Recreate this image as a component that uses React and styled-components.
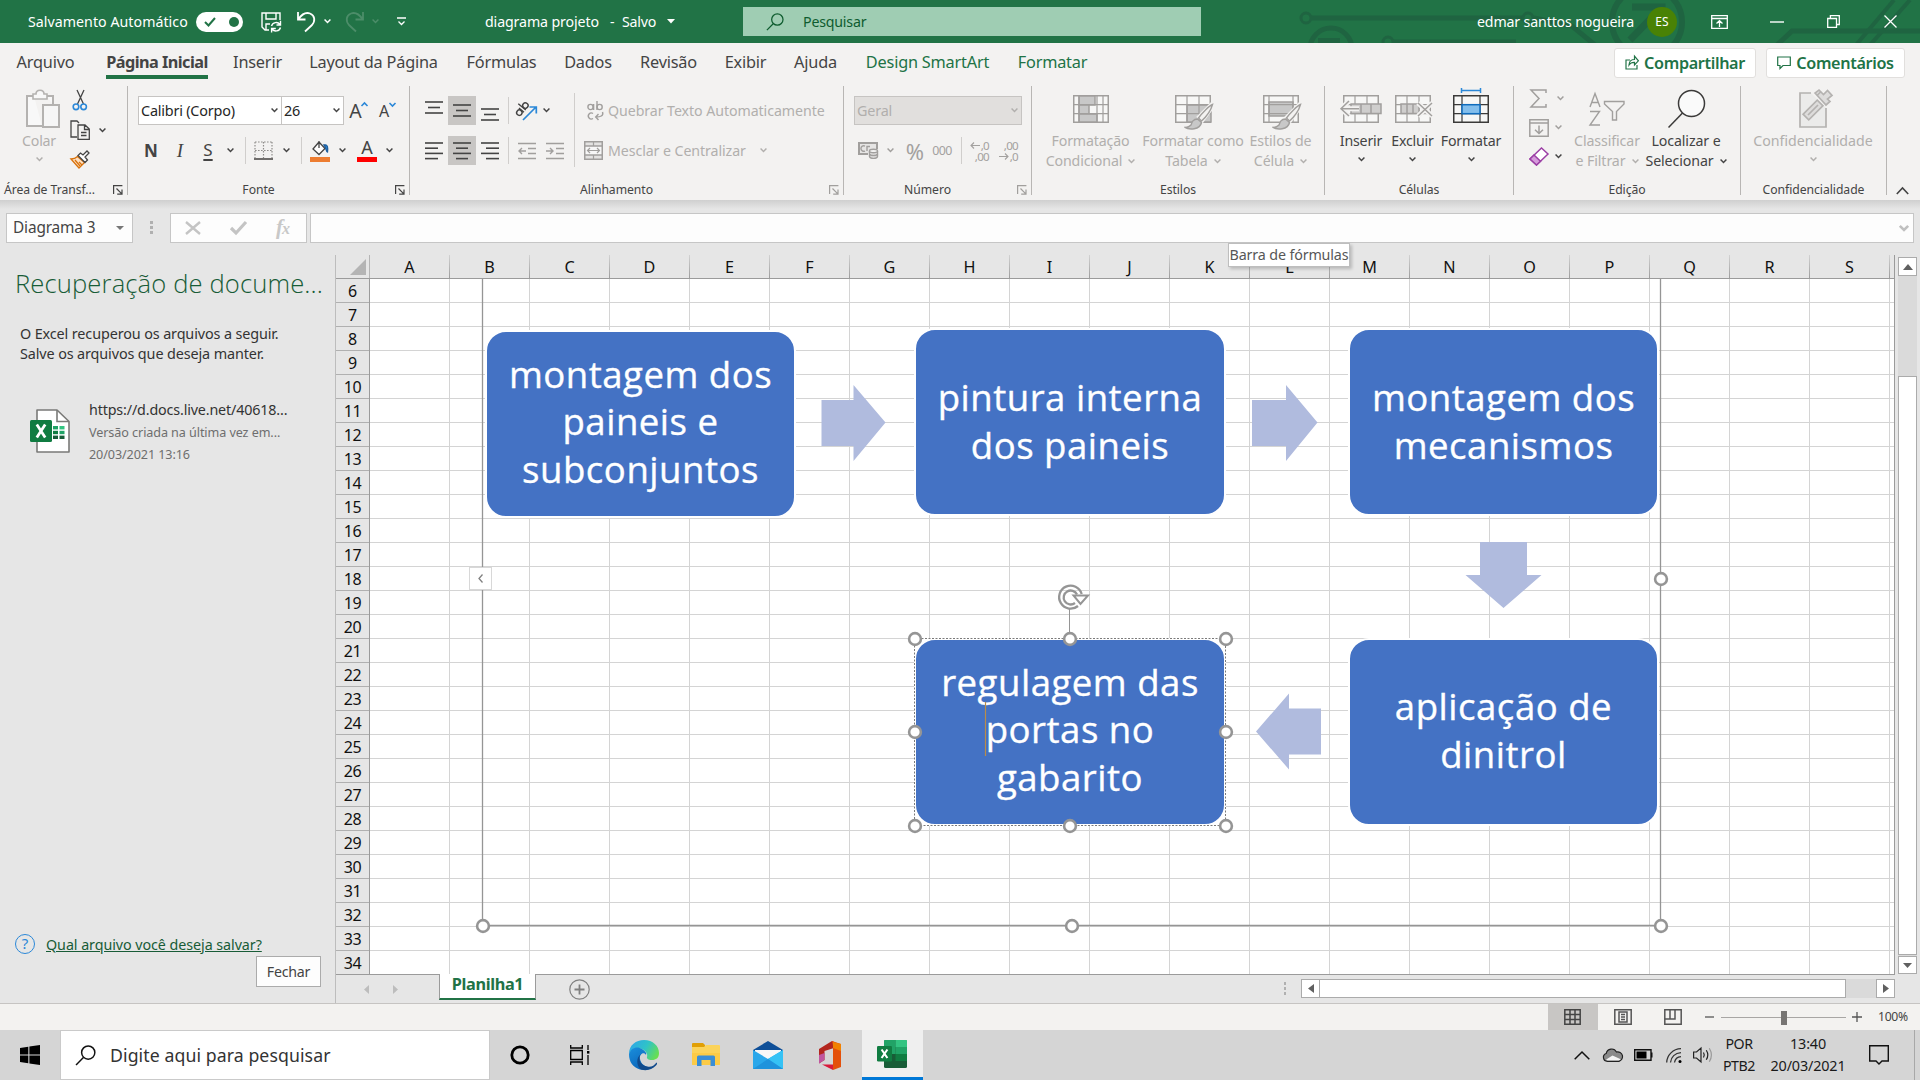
import React from "react";
import styled, { createGlobalStyle, css } from "styled-components";

const UI = '"Noto Sans", "Open Sans", sans-serif';
const INK = "#444444";
const DIM = "#b1afad";
const GREEN = "#217346";

const GlobalStyle = createGlobalStyle`
  * { box-sizing: border-box; }
  html, body { margin: 0; padding: 0; overflow: hidden; }
  body { font-family: ${UI}; color: ${INK}; background: #e6e6e6; }
  svg { display: block; flex: none; overflow: visible; }
`;

const Window = styled.div`
  width: 1920px;
  height: 1080px;
  display: flex;
  flex-direction: column;
  background: #e6e6e6;
  overflow: hidden;
`;

/* ---------- shared ---------- */
const Item = styled.div`
  display: flex;
  align-items: center;
  justify-content: ${(p) => p.$align || "flex-start"};
  flex: none;
  width: ${(p) => p.$w}px;
  margin-left: ${(p) => p.$ml || 0}px;
`;

const Label = styled.span`
  flex: none;
  width: ${(p) => (p.$w ? p.$w + "px" : "auto")};
  margin-left: ${(p) => p.$ml || 0}px;
  font-size: ${(p) => p.$size || 14.2}px;
  letter-spacing: ${(p) => p.$ls ?? -0.2}px;
  font-weight: ${(p) => p.$weight || 400};
  line-height: 20px;
  white-space: nowrap;
  color: ${(p) => p.$color || "inherit"};
`;

const Chevron = ({ color = INK, w = 7, sw = 1.5 }) => (
  <svg width={w} height={w * 0.6} viewBox="0 0 10 6" fill="none" stroke={color} strokeWidth={(sw * 10) / w}>
    <path d="M0.8 0.8 L5 5 L9.2 0.8" />
  </svg>
);

const Svg = ({ w, h, vb, children, ...rest }) => (
  <svg width={w} height={h} viewBox={vb || `0 0 ${w} ${h}`} fill="none" {...rest}>
    {children}
  </svg>
);

/* ---------- title bar ---------- */
const TitleBar = styled.header`
  position: relative;
  height: 43px;
  flex: none;
  display: flex;
  align-items: center;
  background: ${GREEN};
  color: #fff;
`;
const TitlePattern = styled.div`
  position: absolute;
  right: 0;
  top: 0;
  width: 640px;
  height: 43px;
  overflow: hidden;
`;
const TitleContent = styled.div`
  position: relative;
  display: flex;
  align-items: center;
  width: 100%;
  height: 42px;
`;
const Toggle = styled.div`
  width: 47px;
  height: 20px;
  margin-left: 8px;
  padding: 0 4px 0 8px;
  border-radius: 10px;
  background: #fff;
  display: flex;
  align-items: center;
  justify-content: space-between;
`;
const ToggleKnob = styled.i`
  width: 10px;
  height: 10px;
  border-radius: 50%;
  background: ${GREEN};
`;
const SearchBox = styled.div`
  width: 458px;
  height: 29px;
  margin-left: 68px;
  padding-left: 23px;
  display: flex;
  align-items: center;
  background: #9fcdb3;
  color: #0e5c2f;
`;
const Avatar = styled.div`
  width: 30px;
  height: 30px;
  margin-left: 12px;
  border-radius: 50%;
  background: #498205;
  display: flex;
  align-items: center;
  justify-content: center;
  font-size: 12px;
`;

const Magnifier = ({ w, h, color, sw = 1.4 }) => (
  <Svg w={w} h={h} vb="0 0 20 20">
    <circle cx="12.6" cy="7.2" r="6.3" stroke={color} strokeWidth={sw} />
    <path d="M8 12 L1 19" stroke={color} strokeWidth={sw} />
  </Svg>
);

function Title() {
  return (
    <TitleBar>
      <TitlePattern>
        <Svg w={640} h={43} stroke="#1f6441" strokeWidth="5">
          <circle cx="26" cy="18" r="5" strokeWidth="3" />
          <path d="M32 18 H242" />
          <circle cx="248" cy="18" r="5" strokeWidth="3" />
          <circle cx="51" cy="49" r="21" />
          <rect x="38" y="38" width="22" height="7" fill="#1f6441" stroke="none" />
          <circle cx="108" cy="42" r="5" strokeWidth="3" />
          <path d="M114 42 H236" />
          <path d="M254 18 L292 26 L315 45" />
          <circle cx="367" cy="22" r="35" strokeWidth="6" />
          <path d="M352 7 H382 V32 M380 9 L350 40" strokeWidth="7" />
          <path d="M497 45 L512 31 H640" />
          <path d="M576 45 L614 0 M590 45 L630 0" strokeWidth="4" />
        </Svg>
      </TitlePattern>
      <TitleContent>
        <Label $w={160} $ml={28} $ls={0.04}>Salvamento Automático</Label>
        <Toggle>
          <Svg w={12} h={10}><path d="M1 5 L4.5 8.5 L11 1" stroke={GREEN} strokeWidth="2" /></Svg>
          <ToggleKnob />
        </Toggle>
        <Item $w={21} $ml={18}>
          <Svg w={21} h={21} stroke="#fff" strokeWidth="1.4">
            <path d="M8 19 H4 L1 16 V2 H19 V9 M5 2 V8 H15 V2 M5 19 V13 H9" />
            <path d="M10.5 15 A4.8 4.8 0 0 1 19 13.5 M19.5 9.8 V14 H15.5 M19.5 16.5 A4.8 4.8 0 0 1 11 18 M10.6 21.5 V17.5 H14.8" />
          </Svg>
        </Item>
        <Item $w={19} $ml={15}>
          <Svg w={19} h={21} stroke="#fff" strokeWidth="1.8">
            <path d="M1 1 V8.5 H8.5 M1.5 8 C5 3 9 1 13 2.5 C18 4.5 18.5 10 15 14 L8 20.5" />
          </Svg>
        </Item>
        <Item $w={8} $ml={8}><Chevron color="#fff" /></Item>
        <Item $w={19} $ml={13}>
          <Svg w={19} h={21} stroke="#4c8d69" strokeWidth="1.8">
            <path d="M18 1 V8.5 H10.5 M17.5 8 C14 3 10 1 6 2.5 C1 4.5 0.5 10 4 14 L11 20.5" />
          </Svg>
        </Item>
        <Item $w={8} $ml={8}><Chevron color="#4c8d69" /></Item>
        <Item $w={10} $ml={17}>
          <Svg w={9} h={9} stroke="#fff" strokeWidth="1.3"><path d="M0 1 H9 M1.5 4.5 L4.5 7.5 L7.5 4.5" /></Svg>
        </Item>
        <Label $w={117} $ml={78} $ls={-0.12}>diagrama projeto</Label>
        <Label $w={12} $ml={8}>-</Label>
        <Label $w={36} $ml={0}>Salvo</Label>
        <Item $w={8} $ml={9}>
          <Svg w={8} h={5}><path d="M0 0 H8 L4 4.5 Z" fill="#fff" /></Svg>
        </Item>
        <SearchBox>
          <Magnifier w={18} h={18} color="#0e5c2f" />
          <Label $ml={19}>Pesquisar</Label>
        </SearchBox>
        <Label $w={158} $ml={276} $ls={-0.15}>edmar santtos nogueira</Label>
        <Avatar>ES</Avatar>
        <Item $w={18} $ml={34}>
          <Svg w={17} h={14} stroke="#fff" strokeWidth="1.3">
            <path d="M0.7 0.7 H16.3 V13.3 H0.7 Z M0.7 3.5 H16.3 M8.5 12 V6 M5.5 8.5 L8.5 5.7 L11.5 8.5" />
          </Svg>
        </Item>
        <Item $w={14} $ml={41}><Svg w={14} h={2}><path d="M0 1 H14" stroke="#fff" strokeWidth="1.4" /></Svg></Item>
        <Item $w={14} $ml={43}>
          <Svg w={13} h={13} stroke="#fff" strokeWidth="1.3"><path d="M0.7 3.5 H9.5 V12.3 H0.7 Z M3.4 3.5 V0.7 H12.3 V9.5 H9.5" /></Svg>
        </Item>
        <Item $w={14} $ml={43}>
          <Svg w={13} h={13} stroke="#fff" strokeWidth="1.3"><path d="M0.5 0.5 L12.5 12.5 M12.5 0.5 L0.5 12.5" /></Svg>
        </Item>
      </TitleContent>
    </TitleBar>
  );
}

/* ---------- tabs ---------- */
const TabRow = styled.nav`
  height: 41px;
  flex: none;
  display: flex;
  align-items: flex-start;
  padding: 5px 15px 0 16px;
  background: #f3f2f1;
`;
const Tab = styled.div`
  width: ${(p) => p.$w}px;
  margin-right: ${(p) => p.$mr}px;
  height: 31px;
  flex: none;
  display: flex;
  justify-content: center;
  border-bottom: 4px solid ${(p) => (p.$active ? GREEN : "transparent")};
  font-size: 16.3px;
  letter-spacing: ${(p) => (p.$active ? -0.55 : -0.2)}px;
  line-height: 28px;
  font-weight: ${(p) => (p.$active ? 700 : 400)};
  color: ${(p) => (p.$context ? GREEN : INK)};
  white-space: nowrap;
`;
const TabAction = styled.div`
  width: ${(p) => p.$w}px;
  height: 30px;
  margin-left: ${(p) => p.$ml || 10}px;
  padding-bottom: 1px;
  flex: none;
  display: flex;
  align-items: center;
  justify-content: center;
  gap: 5px;
  background: #fff;
  border: 1px solid #e1dfdd;
  border-radius: 3px;
  color: ${GREEN};
  font-size: 16.2px;
  font-weight: 600;
  letter-spacing: -0.35px;
  white-space: nowrap;
`;
const TABS = [
  ["Arquivo", 59, 31], ["Página Inicial", 102, 26], ["Inserir", 47, 27], ["Layout da Página", 131, 28], ["Fórmulas", 69, 28],
  ["Dados", 48, 28], ["Revisão", 57, 28], ["Exibir", 41, 28], ["Ajuda", 43, 28], ["Design SmartArt", 125, 28], ["Formatar", 69, 28],
];
function Tabs() {
  return (
    <TabRow>
      {TABS.map(([t, w, mr], i) => (
        <Tab key={t} $w={w} $mr={mr} $active={i === 1} $context={i > 8}>{t}</Tab>
      ))}
      <TabAction $w={142} $ml={499}>
        <Svg w={14} h={15} stroke={GREEN} strokeWidth="1.2">
          <path d="M5 5 H1 V14 H12 V10 M4 10 C4 6 7 4.5 9.5 4.5 V1.2 L13.4 5.8 L9.5 10 V7.3 C7 7.2 5.2 8 4 10 Z" />
        </Svg>
        Compartilhar
      </TabAction>
      <TabAction $w={139}>
        <Svg w={14} h={14} stroke={GREEN} strokeWidth="1.2"><path d="M0.7 1 H13.3 V9.5 H6 L3 12.5 V9.5 H0.7 Z" /></Svg>
        Comentários
      </TabAction>
    </TabRow>
  );
}

/* ---------- ribbon ---------- */
const Ribbon = styled.section`
  height: 116px;
  flex: none;
  display: flex;
  padding: 2px 0 5px;
  background: #f3f2f1;
`;
const Group = styled.div`
  width: ${(p) => p.$w}px;
  height: 109px;
  flex: none;
  display: flex;
  flex-direction: column;
  justify-content: space-between;
  border-right: 1px solid #b8b6b4;
`;
const GroupBody = styled.div`
  display: flex;
  height: 90px;
  padding-left: ${(p) => p.$pl || 0}px;
`;
const Rows = styled.div`
  display: flex;
  flex-direction: column;
  padding-top: 10px;
  gap: 11px;
  flex: none;
  width: ${(p) => (p.$w ? p.$w + "px" : "auto")};
`;
const Row = styled.div`
  display: flex;
  align-items: center;
  height: 29px;
`;
const GroupFoot = styled.div`
  display: flex;
  align-items: center;
  height: 10px;
  padding-right: ${(p) => (p.$launcher ? 4 : 0)}px;
  font-size: 12.2px;
  letter-spacing: -0.05px;
  line-height: 10px;
  color: ${INK};
`;
const FootText = styled.div`
  flex: 1;
  text-align: center;
  white-space: nowrap;
  padding-right: ${(p) => p.$pr || 0}px;
`;
const Launcher = ({ color = INK }) => (
  <Svg w={10} h={10} stroke={color} strokeWidth="1.2">
    <path d="M0.6 9 V0.6 H9.4 M3.5 3.5 L8.8 8.8 M9 4.5 V9.2 H4.2" />
  </Svg>
);
const Foot = ({ children, launcher, pr }) => (
  <GroupFoot $launcher={!!launcher}>
    <FootText $pr={pr ?? (launcher ? 6 : 0)}>{children}</FootText>
    {launcher && <Launcher color={launcher} />}
  </GroupFoot>
);
const VLine = styled.i`
  width: 1px;
  height: ${(p) => p.$h || 27}px;
  margin-left: ${(p) => p.$ml}px;
  margin-top: ${(p) => p.$mt || 0}px;
  background: #d0cecc;
  flex: none;
`;
const Combo = styled.div`
  width: ${(p) => p.$w}px;
  height: 29px;
  flex: none;
  margin-left: ${(p) => p.$ml || 0}px;
  padding: 0 3px 0 2px;
  display: flex;
  align-items: center;
  justify-content: space-between;
  border: 1px solid #c6c4c2;
  background: ${(p) => (p.$disabled ? "#e1dfdd" : "#fff")};
  color: ${(p) => (p.$disabled ? DIM : "#262626")};
  font-size: 14.4px;
  letter-spacing: -0.2px;
  white-space: nowrap;
`;
const Pressed = styled.div`
  width: 28px;
  height: 29px;
  margin-left: 5px;
  display: flex;
  align-items: center;
  justify-content: center;
  background: #c8c6c4;
  flex: none;
`;
const BigButton = styled.div`
  width: ${(p) => p.$w}px;
  margin-left: ${(p) => p.$ml || 0}px;
  flex: none;
  display: flex;
  flex-direction: column;
  align-items: center;
  color: ${(p) => (p.$disabled ? DIM : INK)};
`;
const BigIcon = styled.div`
  height: 45px;
  padding-left: ${(p) => p.$pl || 0}px;
  display: flex;
  align-items: center;
  justify-content: center;
`;
const BigText = styled.div`
  display: flex;
  align-items: center;
  justify-content: center;
  gap: 6px;
  height: 20px;
  font-size: 14.2px;
  letter-spacing: ${(p) => p.$ls ?? -0.2}px;
  line-height: 20px;
  white-space: nowrap;
`;
const ChevronRow = styled.div`
  height: 16px;
  display: flex;
  align-items: center;
`;
const SmallStack = styled.div`
  width: 38px;
  margin-left: ${(p) => p.$ml}px;
  margin-top: ${(p) => p.$mt || 0}px;
  display: flex;
  flex-direction: column;
  flex: none;
`;
const SmallRow = styled.div`
  height: ${(p) => p.$h || 30}px;
  display: flex;
  align-items: center;
  gap: ${(p) => p.$gap ?? 9}px;
`;
const Glyph = styled.span`
  width: ${(p) => p.$w}px;
  margin-left: ${(p) => p.$ml || 0}px;
  flex: none;
  text-align: center;
  font-size: ${(p) => p.$size || 17}px;
  line-height: 22px;
  letter-spacing: ${(p) => p.$ls || 0}px;
  color: ${(p) => p.$color || INK};
  ${(p) => p.$bold && css`font-weight: 700;`}
  ${(p) => p.$italic && css`font-style: italic; font-family: "Liberation Serif", serif;`}
  ${(p) => p.$underline && css`padding-bottom: 2px; text-decoration: underline; text-underline-offset: 3px; text-decoration-thickness: 1.5px;`}
`;
const ColorGlyph = styled.div`
  width: 20px;
  height: 23px;
  flex: none;
  margin-left: ${(p) => p.$ml}px;
  border-bottom: 5px solid ${(p) => p.$bar};
  display: flex;
  align-items: flex-end;
  justify-content: center;
  font-size: 18px;
  line-height: 19px;
`;
const DecimalGlyph = styled.div`
  width: 20px;
  margin-left: ${(p) => p.$ml}px;
  font-size: 11.6px;
  line-height: 11px;
  letter-spacing: -0.7px;
  text-align: right;
  color: #a3a19f;
  white-space: nowrap;
`;
const Decimals = styled.div`
  display: flex;
  justify-content: flex-end;
  align-items: center;
  height: 11px;
  gap: 1px;
`;
const SmallArrow = ({ flip }) => (
  <Svg w={10} h={7} stroke="#a3a19f" strokeWidth="1.1">
    <path d={flip ? "M0 3.5 H9 M6 0.5 L9 3.5 L6 6.5" : "M10 3.5 H1 M4 0.5 L1 3.5 L4 6.5"} />
  </Svg>
);

const Lines = ({ rows, color = INK, h = 20, w = 18 }) => (
  <Svg w={w} h={h} stroke={color} strokeWidth="1.6">
    {rows.map(([y, a, b]) => <path key={y} d={`M${a} ${y} H${b}`} />)}
  </Svg>
);
const GridIcon = ({ w = 36, h = 28, stroke = "#a19f9d", fill = "#c8c8c8", fills = [], cols = [12, 24], children }) => (
  <Svg w={w} h={h} stroke={stroke} strokeWidth="1.5">
    <rect x="0.75" y="0.75" width={w - 1.5} height={h - 1.5} fill="#f7f7f6" />
    {fills.map(([x, y, a, b], i) => <rect key={i} x={x} y={y} width={a} height={b} fill={fill} />)}
    <path d={`M0 9.7 H${w} M0 18.6 H${w} ` + cols.map((c) => `M${c} 0 V${h}`).join(" ")} strokeWidth="1.2" />
    {children}
  </Svg>
);
const BrushOverlay = () => (
  <g stroke="#a19f9d" strokeWidth="1.4">
    <path d="M37 9 L24 22 L27 26 L38 11 Z" fill="#f3f2f1" stroke="#f3f2f1" strokeWidth="4" />
    <path d="M37.5 9.5 C34 11 27 18 23.5 23 L26.5 26 C31 22 36 15 37.5 9.5 Z" fill="#f3f2f1" />
    <path d="M22.5 24 C18 24 17 27 16 30 C14 32 11 32.5 9.5 32.2 C14 35 25 35 26.5 27.5 Z" fill="#c8c8c8" />
  </g>
);
const TwoLine = ({ a, b, dim, ls }) => (
  <>
    <BigText $ls={ls}>{a}</BigText>
    <BigText $ls={ls}>{b} <Chevron color={dim ? DIM : INK} /></BigText>
  </>
);
const RibbonEnd = styled.div`
  flex: 1;
  display: flex;
  align-items: flex-end;
  padding: 0 0 0 9px;
`;

function RibbonBar() {
  return (
    <Ribbon>
      <Group $w={128}>
        <GroupBody $pl={9}>
          <BigButton $w={60} $disabled>
            <BigIcon $pl={7}>
              <Svg w={34} h={40} stroke="#b4b2b0" strokeWidth="2">
                <path d="M16 37 H1 V7 H8 M20 7 H27 V15" fill="#f8f8f8" />
                <path d="M7 10 V5 H10 C10 0 18 0 18 5 H21 V10 Z" fill="#f8f8f8" strokeWidth="1.6" />
                <rect x="17" y="16" width="16" height="22" fill="#f6f6f6" />
              </Svg>
            </BigIcon>
            <BigText>Colar</BigText>
            <ChevronRow><Chevron color={DIM} /></ChevronRow>
          </BigButton>
          <SmallStack $ml={1}>
            <SmallRow $h={29}>
              <Svg w={20} h={21} strokeWidth="1.3">
                <path d="M7 0 L13.5 14 M14 0 L7.5 14" stroke={INK} />
                <circle cx="6" cy="16.8" r="2.8" stroke="#2b88d8" strokeWidth="1.6" />
                <circle cx="13.6" cy="16.8" r="2.8" stroke="#2b88d8" strokeWidth="1.6" />
              </Svg>
            </SmallRow>
            <SmallRow $h={30}>
              <Svg w={20} h={20} stroke={INK} strokeWidth="1.3">
                <path d="M7 17 H1 V1 H7 L9 3 M8 5 H15 L19.3 9 V19.3 H8 Z M14.5 5 V9.5 H19 M11 12.5 H16.5 M11 15.5 H16.5" />
              </Svg>
              <Chevron />
            </SmallRow>
            <SmallRow $h={29}>
              <Svg w={20} h={19} strokeWidth="1.3">
                <path d="M1 9 L9 18 L14.5 12.5 L7.5 6.5 C5.5 8.5 3.5 9 1 9 Z" fill="#fce0c4" stroke="#d9730d" />
                <path d="M5 10 L10 16 M9 12 L12 15" stroke="#d9730d" />
                <path d="M8 5.5 L15 12.5 L17.5 10 L15 7 L19 3 L17 1 L13 5 L10.5 3 Z" fill="#fff" stroke={INK} />
              </Svg>
            </SmallRow>
          </SmallStack>
        </GroupBody>
        <Foot launcher={INK} pr={14}>Área de Transf...</Foot>
      </Group>

      <Group $w={282}>
        <GroupBody $pl={10}>
          <Rows>
            <Row>
              <Combo $w={144}>Calibri (Corpo)<Chevron /></Combo>
              <Combo $w={63} $ml={-1}>26<Chevron /></Combo>
              <Glyph $w={13} $ml={5} $size={19.5}>A</Glyph>
              <Svg w={7} h={20} stroke="#2b88d8" strokeWidth="1.6"><path d="M-0.5 5 L2.5 2 L5.5 5" /></Svg>
              <Glyph $w={12} $ml={9} $size={16}>A</Glyph>
              <Svg w={7} h={20} stroke="#2b88d8" strokeWidth="1.6"><path d="M-0.5 2 L2.5 5 L5.5 2" /></Svg>
            </Row>
            <Row>
              <Glyph $w={16} $ml={5} $bold $size={17}>N</Glyph>
              <Glyph $w={14} $ml={14} $italic $size={19}>I</Glyph>
              <Glyph $w={12} $ml={15} $underline $size={17}>S</Glyph>
              <Item $w={8} $ml={13}><Chevron /></Item>
              <VLine $ml={10} />
              <Item $w={19} $ml={8}>
                <Svg w={19} h={19} stroke="#8f8d8b" strokeWidth="1.2">
                  <path d="M1 1 H18 M1 9.5 H18 M1 1 V18 M9.5 1 V18 M18 1 V18" strokeDasharray="1.6 1.4" />
                  <path d="M0 18 H19" stroke="#6f6d6b" strokeWidth="2" />
                </Svg>
              </Item>
              <Item $w={8} $ml={10}><Chevron /></Item>
              <VLine $ml={10} />
              <ColorGlyph $ml={8} $bar="#ed7d31">
                <Svg w={20} h={17} strokeWidth="1.3">
                  <path d="M9 2 L3 9 L9 14.5 L15 8.5 Z M9 8 V1" stroke={INK} fill="#fff" />
                  <path d="M14 5 C18 4 18 8 17.5 12 C16 12 16.5 8 14 5 Z" fill="#2b88d8" stroke="#1f5f9e" />
                </Svg>
              </ColorGlyph>
              <Item $w={8} $ml={9}><Chevron /></Item>
              <ColorGlyph $ml={10} $bar="#ff0000">A</ColorGlyph>
              <Item $w={8} $ml={9}><Chevron /></Item>
            </Row>
          </Rows>
        </GroupBody>
        <Foot launcher={INK}>Fonte</Foot>
      </Group>

      <Group $w={434}>
        <GroupBody $pl={15}>
          <Rows $w={150}>
            <Row>
              <Lines rows={[[3, 0, 18], [8.5, 3, 15], [14, 0, 18]]} h={24} />
              <Pressed><Lines rows={[[4, 0, 18], [9.5, 3, 15], [15, 0, 18]]} /></Pressed>
              <Item $w={18} $ml={5}><Lines rows={[[10, 0, 18], [15.5, 3, 15], [21, 0, 18]]} h={24} /></Item>
              <VLine $ml={9} />
              <Item $w={21} $ml={8}>
                <Svg w={21} h={22} strokeWidth="1.7">
                  <path d="M6 20 L19 7 M12.5 7 H19.3 V13.5" stroke="#2b88d8" />
                  <g stroke={INK} strokeWidth="1.4" transform="rotate(-50 6 9)">
                    <circle cx="0.8" cy="8.6" r="2.7" /><path d="M4.2 5.2 V11.8 M7 2 V11.8" /><circle cx="10.2" cy="8.6" r="2.7" />
                  </g>
                </Svg>
              </Item>
              <Item $w={8} $ml={5}><Chevron /></Item>
            </Row>
            <Row>
              <Lines rows={[[2, 0, 18], [7.2, 0, 13], [12.4, 0, 18], [17.6, 0, 13]]} />
              <Pressed><Lines rows={[[2, 0, 18], [7.2, 3, 15], [12.4, 0, 18], [17.6, 3, 15]]} /></Pressed>
              <Item $w={18} $ml={5}><Lines rows={[[2, 0, 18], [7.2, 5, 18], [12.4, 0, 18], [17.6, 5, 18]]} /></Item>
              <VLine $ml={9} />
              <Item $w={18} $ml={9}>
                <Svg w={18} h={18} stroke="#a19f9d" strokeWidth="1.4"><path d="M0 1.5 H18 M10 6.5 H18 M10 11.5 H18 M0 16.5 H18 M8 9 H1 M4 6 L1 9 L4 12" /></Svg>
              </Item>
              <Item $w={18} $ml={10}>
                <Svg w={18} h={18} stroke="#a19f9d" strokeWidth="1.4"><path d="M0 1.5 H18 M10 6.5 H18 M10 11.5 H18 M0 16.5 H18 M0 9 H7 M4 6 L7 9 L4 12" /></Svg>
              </Item>
            </Row>
          </Rows>
          <VLine $ml={-1} $h={74} $mt={7} />
          <Rows>
            <Row>
              <Item $w={17} $ml={12}>
                <Svg w={17} h={20} stroke="#a19f9d" strokeWidth="1.4">
                  <circle cx="3.5" cy="6" r="2.6" /><path d="M6.6 3 V9 M10 0 V9" /><circle cx="12.6" cy="6" r="2.6" />
                  <path d="M6 12.5 A3 3 0 1 0 6 17.5 M15.5 11 C17 15 13 16 9 16 M11.5 13 L8.7 16 L11.5 19" />
                </Svg>
              </Item>
              <Label $ml={4} $ls={-0.07} $color={DIM}>Quebrar Texto Automaticamente</Label>
            </Row>
            <Row>
              <Item $w={19} $ml={9}>
                <Svg w={19} h={19} stroke="#a19f9d" strokeWidth="1.5">
                  <rect x="0.75" y="0.75" width="17.5" height="17.5" fill="#e3e2e1" />
                  <rect x="0.75" y="5" width="17.5" height="9" fill="#f7f7f7" />
                  <path d="M9.5 0 V5 M9.5 14 V19 M3.5 9.5 H15.5 M6 7 L3.5 9.5 L6 12 M13 7 L15.5 9.5 L13 12" strokeWidth="1.2" />
                </Svg>
              </Item>
              <Label $ml={5} $w={142} $ls={-0.08} $color={DIM}>Mesclar e Centralizar</Label>
              <Item $w={8} $ml={10}><Chevron color={DIM} /></Item>
            </Row>
          </Rows>
        </GroupBody>
        <Foot launcher="#a19f9d">Alinhamento</Foot>
      </Group>

      <Group $w={188}>
        <GroupBody $pl={10}>
          <Rows>
            <Row><Combo $w={168} $disabled>Geral<Chevron color={DIM} /></Combo></Row>
            <Row>
              <Item $w={20} $ml={4}>
                <Svg w={20} h={17} stroke="#a19f9d" strokeWidth="1.4">
                  <path d="M19 7 V1 H1 V12 H10" fill="#e6e5e4" strokeWidth="2" />
                  <path d="M7 4 A2.8 2.8 0 1 0 7 9 M9 9 V4.5 L12 4.5" />
                  <path d="M11.5 9 V14.5 C12 17 19 17 19.5 14.5 V9" fill="#e6e5e4" />
                  <ellipse cx="15.5" cy="9" rx="4" ry="1.7" fill="#f3f2f1" /><path d="M11.5 12 C12 14 19 14 19.5 12" />
                </Svg>
              </Item>
              <Item $w={8} $ml={9}><Chevron color="#a19f9d" /></Item>
              <Glyph $w={20} $ml={10} $size={22} $color="#a3a19f">%</Glyph>
              <Glyph $w={22} $ml={6} $size={12.4} $ls={-0.6} $color="#a3a19f">000</Glyph>
              <VLine $ml={8} />
              <DecimalGlyph $ml={7}>
                <Decimals><SmallArrow />,0</Decimals>
                <Decimals>,00</Decimals>
              </DecimalGlyph>
              <DecimalGlyph $ml={9}>
                <Decimals>,00</Decimals>
                <Decimals><SmallArrow flip />,0</Decimals>
              </DecimalGlyph>
            </Row>
          </Rows>
        </GroupBody>
        <Foot launcher="#a19f9d">Número</Foot>
      </Group>

      <Group $w={293}>
        <GroupBody $pl={8}>
          <BigButton $w={101} $disabled>
            <BigIcon>
              <GridIcon cols={[6, 24, 30]} fills={[[6, 1, 16, 9], [6, 10, 10, 9], [6, 19, 18, 8]]} />
            </BigIcon>
            <TwoLine a="Formatação" b="Condicional" dim ls={-0.15} />
          </BigButton>
          <BigButton $w={104} $disabled>
            <BigIcon>
              <GridIcon cols={[12, 24]} fills={[[12, 10, 24, 17]]}><BrushOverlay /></GridIcon>
            </BigIcon>
            <TwoLine a="Formatar como" b="Tabela" dim ls={-0.1} />
          </BigButton>
          <BigButton $w={71} $disabled>
            <BigIcon>
              <GridIcon cols={[6, 30]} fills={[[6, 7, 24, 14]]}><BrushOverlay /></GridIcon>
            </BigIcon>
            <TwoLine a="Estilos de" b="Célula" dim ls={-0.1} />
          </BigButton>
        </GroupBody>
        <Foot>Estilos</Foot>
      </Group>

      <Group $w={189}>
        <GroupBody $pl={10}>
          <BigButton $w={52}>
            <BigIcon>
              <GridIcon cols={[12, 24]}>
                <rect x="8" y="9" width="30" height="9.5" fill="#cfcecd" />
                <path d="M18 9 V18 M28 9 V18" />
                <path d="M16 13.7 H-1 M6 6 L-2 13.7 L6 21" stroke="#f3f2f1" strokeWidth="5" />
                <path d="M16 13.7 H-1 M6 6 L-2 13.7 L6 21" />
              </GridIcon>
            </BigIcon>
            <BigText>Inserir</BigText>
            <ChevronRow><Chevron /></ChevronRow>
          </BigButton>
          <BigButton $w={51}>
            <BigIcon $pl={1}>
              <GridIcon cols={[12, 24]}>
                <rect x="6" y="9" width="18" height="9.5" fill="#cfcecd" />
                <path d="M12 9 V18 M18 9 V18" />
                <path d="M23 8 L37 21 M37 8 L23 21" stroke="#f3f2f1" strokeWidth="5" />
                <path d="M23 8 L37 21 M37 8 L23 21" />
              </GridIcon>
            </BigIcon>
            <BigText>Excluir</BigText>
            <ChevronRow><Chevron /></ChevronRow>
          </BigButton>
          <BigButton $w={66}>
            <BigIcon>
              <GridIcon stroke="#3b3a39" cols={[9, 27]}>
                <rect x="9" y="9.7" width="18" height="9" fill="#83beec" stroke="#0f6cbd" />
                <path d="M8 -4.5 H28 M8.5 -7 V-2 M27.5 -7 V-2" stroke="#2b88d8" />
              </GridIcon>
            </BigIcon>
            <BigText>Formatar</BigText>
            <ChevronRow><Chevron /></ChevronRow>
          </BigButton>
        </GroupBody>
        <Foot>Células</Foot>
      </Group>

      <Group $w={227}>
        <GroupBody $pl={0}>
          <SmallStack $ml={15}>
            <SmallRow $h={25}>
              <Svg w={19} h={19} stroke="#a19f9d" strokeWidth="1.5"><path d="M17 4 V1 H2 L10 9.5 L2 18 H17 V15" /></Svg>
              <Chevron color="#a19f9d" />
            </SmallRow>
            <SmallRow $h={33} $gap={6}>
              <Svg w={20} h={18} stroke="#a19f9d" strokeWidth="1.5">
                <path d="M0.8 0.8 H19.2 V17.2 H0.8 Z M0.8 4 H19.2 M10 6.5 V14.5 M6 10.7 L10 14.5 L14 10.7" />
              </Svg>
              <Chevron color="#a19f9d" />
            </SmallRow>
            <SmallRow $h={24} $gap={6}>
              <Svg w={20} h={19} stroke="#9b3fa5" strokeWidth="1.5">
                <path d="M12.5 1 L19 7 L7.5 18 L1 12 Z" fill="#fff" /><path d="M5 8 L11.5 14.2 L7.5 18 L1 12 Z" fill="#d59bdb" />
              </Svg>
              <Chevron />
            </SmallRow>
          </SmallStack>
          <BigButton $w={76} $ml={2} $disabled>
            <BigIcon>
              <Svg w={36} h={34} stroke="#a19f9d" strokeWidth="1.4">
                <path d="M1 15 L6 1.5 L11 15 M3 10.5 H9 M1 19.5 H10.5 L1 33 H11" />
                <path d="M15.5 9.5 H35 V12 L27.5 19.5 V28 H23.5 V19.5 L15.5 12 Z" />
              </Svg>
            </BigIcon>
            <TwoLine a="Classificar" b="e Filtrar" dim ls={-0.1} />
          </BigButton>
          <BigButton $w={82}>
            <BigIcon>
              <Svg w={37} h={38} stroke="#3b3a39" strokeWidth="1.5">
                <circle cx="23.5" cy="13.5" r="13" fill="#fafafa" /><path d="M14.5 23 L0.5 37.5" />
              </Svg>
            </BigIcon>
            <TwoLine a="Localizar e" b="Selecionar" ls={-0.1} />
          </BigButton>
        </GroupBody>
        <Foot>Edição</Foot>
      </Group>

      <Group $w={146}>
        <GroupBody $pl={10}>
          <BigButton $w={124} $disabled>
            <BigIcon $pl={5}>
              <Svg w={34} h={38} stroke="#b4b2b0" strokeWidth="1.7">
                <path d="M12 3 H1 V37 H27 V18" fill="#ebebea" />
                <rect x="4" y="16" width="20" height="8" transform="rotate(-45 14 20)" fill="#dddcdb" />
                <path d="M9 25 L19 15" />
                <path d="M16 3 L27 15 L31 11.5 L28.5 9 L33 5.5 L28.5 0.5 L24.5 4.5 L20 0 Z" fill="#dddcdb" />
                <path d="M18 5.5 L22 1.5" />
              </Svg>
            </BigIcon>
            <BigText $ls={0}>Confidencialidade</BigText>
            <ChevronRow><Chevron color={DIM} /></ChevronRow>
          </BigButton>
        </GroupBody>
        <Foot>Confidencialidade</Foot>
      </Group>
      <RibbonEnd><Svg w={13} h={8} stroke={INK} strokeWidth="1.6"><path d="M0.8 7 L6.5 1 L12.2 7" /></Svg></RibbonEnd>
    </Ribbon>
  );
}

/* ---------- formula bar ---------- */
const FormulaBar = styled.section`
  height: 55px;
  flex: none;
  display: flex;
  align-items: flex-start;
  padding: 13px 6px 0;
  background: linear-gradient(#cfcfcf 0, #e6e6e6 9px);
`;
const NameBox = styled.div`
  width: 127px;
  height: 30px;
  padding: 0 8px 0 6px;
  display: flex;
  align-items: center;
  justify-content: space-between;
  border: 1px solid #c6c6c6;
  background: #fdfdfd;
`;
const Dots = styled.i`
  width: 3px;
  height: 13px;
  margin: ${(p) => p.$m};
  background: repeating-linear-gradient(#b0b0b0 0 3px, transparent 3px 5px);
`;
const FxBox = styled.div`
  width: 137px;
  height: 30px;
  padding: 0 17px 0 14px;
  display: flex;
  align-items: center;
  justify-content: space-between;
  border: 1px solid #c6c6c6;
  background: #fdfdfd;
`;
const Fx = styled.span`
  font: italic 700 21px/24px "Liberation Serif", serif;
  color: #c8c8c8;
  letter-spacing: -1px;
  small { font-size: 16px; }
`;
const FormulaInput = styled.div`
  width: 1604px;
  height: 30px;
  margin-left: 3px;
  padding-right: 4px;
  display: flex;
  align-items: center;
  justify-content: flex-end;
  border: 1px solid #c6c6c6;
  background: #fdfdfd;
`;
const InputWrap = styled.div`
  position: relative;
`;
const Tooltip = styled.div`
  position: absolute;
  z-index: 3;
  left: 921px;
  top: 30px;
  width: 122px;
  height: 24px;
  border: 1px solid #bebebe;
  background: #fff;
  box-shadow: 2px 2px 3px rgba(0, 0, 0, 0.2);
  color: #575757;
  font-size: 14.3px;
  letter-spacing: -0.15px;
  line-height: 21px;
  text-align: center;
  white-space: nowrap;
`;

function Formula() {
  return (
    <FormulaBar>
      <NameBox>
        <Label $size={15.4} $ls={-0.15}>Diagrama 3</Label>
        <Svg w={8} h={4}><path d="M0 0 H8 L4 4 Z" fill="#777" /></Svg>
      </NameBox>
      <Dots $m="8px 17px 0 17px" />
      <FxBox>
        <Svg w={16} h={14} stroke="#c4c4c4" strokeWidth="2.4"><path d="M1 1 L15 13 M15 1 L1 13" /></Svg>
        <Svg w={17} h={14} stroke="#c4c4c4" strokeWidth="3.2"><path d="M1 7 L6 12 L16 1" /></Svg>
        <Fx>f<small>x</small></Fx>
      </FxBox>
      <InputWrap>
        <FormulaInput><Chevron color="#c0c0c0" w={10} sw={2.6} /></FormulaInput>
        <Tooltip>Barra de fórmulas</Tooltip>
      </InputWrap>
    </FormulaBar>
  );
}

/* ---------- recovery pane ---------- */
const Main = styled.main`
  height: 748px;
  flex: none;
  display: flex;
`;
const Pane = styled.aside`
  width: 335px;
  display: flex;
  flex-direction: column;
  flex: none;
  background: #e6e6e6;
`;
const PaneTitle = styled.h2`
  margin: 10px 0 0 15px;
  font: 300 25.6px/38px "Open Sans", sans-serif;
  letter-spacing: 0.12px;
  color: #185c37;
  white-space: nowrap;
`;
const PaneText = styled.p`
  margin: 21px 0 0 20px;
  font-size: 14.4px;
  letter-spacing: -0.12px;
  line-height: 20px;
  color: #333;
  white-space: nowrap;
`;
const FileRow = styled.div`
  display: flex;
  margin: 35px 0 0 30px;
`;
const FileIcon = styled.div`
  padding-top: 10px;
  width: 59px;
`;
const FileText = styled.div`
  display: flex;
  flex-direction: column;
  line-height: 22px;
  white-space: nowrap;
  font-size: 14.3px;
  letter-spacing: -0.15px;
  color: #333;
`;
const FileMeta = styled.span`
  margin-top: ${(p) => p.$mt || 0}px;
  font-size: 12.6px;
  letter-spacing: ${(p) => p.$ls}px;
  color: #6e6e6e;
`;
const HelpRow = styled.div`
  margin: auto 0 0 15px;
  height: 24px;
  display: flex;
  align-items: center;
  gap: 11px;
`;
const HelpBadge = styled.span`
  width: 20px;
  height: 20px;
  border: 1.5px solid #2b88d8;
  border-radius: 50%;
  color: #2b88d8;
  font-size: 15px;
  line-height: 17px;
  text-align: center;
`;
const HelpLink = styled.a`
  font-size: 14.3px;
  letter-spacing: -0.06px;
  color: #185c37;
  text-decoration: underline;
  white-space: nowrap;
`;
const CloseButton = styled.button`
  width: 65px;
  height: 31px;
  margin: 0 0 16px 256px;
  padding: 0;
  border: 1px solid #ababab;
  background: #fdfdfd;
  font: 14.2px/20px ${UI};
  letter-spacing: -0.2px;
  color: ${INK};
`;

function RecoveryPane() {
  return (
    <Pane>
      <PaneTitle>Recuperação de docume...</PaneTitle>
      <PaneText>O Excel recuperou os arquivos a seguir.<br />Salve os arquivos que deseja manter.</PaneText>
      <FileRow>
        <FileIcon>
          <Svg w={40} h={44}>
            <path d="M7 1 H27 L39 12.5 V43 H7 Z" fill="#fff" stroke="#7a7a78" strokeWidth="1.6" strokeLinejoin="round" />
            <path d="M27 1 V12.5 H39" stroke="#7a7a78" strokeWidth="1.6" />
            <g>
              <rect x="23" y="17" width="5" height="3.4" fill="#21a366" /><rect x="29.5" y="17" width="5" height="3.4" fill="#33c481" />
              <rect x="23" y="21.8" width="5" height="3.4" fill="#107c41" /><rect x="29.5" y="21.8" width="5" height="3.4" fill="#21a366" />
              <rect x="23" y="26.6" width="5" height="3.4" fill="#185c37" /><rect x="29.5" y="26.6" width="5" height="3.4" fill="#185c37" />
            </g>
            <rect x="0" y="11" width="22" height="22" rx="1.5" fill="#107c41" />
            <path d="M6.8 15.6 L15.2 28.4 M15.2 15.6 L6.8 28.4" stroke="#fff" strokeWidth="2.8" />
          </Svg>
        </FileIcon>
        <FileText>
          https://d.docs.live.net/40618...
          <FileMeta $mt={1} $ls={-0.08}>Versão criada na última vez em...</FileMeta>
          <FileMeta $ls={-0.1}>20/03/2021 13:16</FileMeta>
        </FileText>
      </FileRow>
      <HelpRow><HelpBadge>?</HelpBadge><HelpLink>Qual arquivo você deseja salvar?</HelpLink></HelpRow>
      <CloseButton>Fechar</CloseButton>
    </Pane>
  );
}

/* ---------- sheet ---------- */
const SheetArea = styled.div`
  width: 1585px;
  display: flex;
  flex-direction: column;
  border-left: 1px solid #bdbdbd;
`;
const SheetMain = styled.div`
  display: flex;
  height: 719px;
`;
const Sheet = styled.div`
  width: 1559px;
  flex: none;
  overflow: hidden;
  border-right: 1px solid #9b9b9b;
`;
const ColumnHeads = styled.div`
  height: 24px;
  display: flex;
  border-bottom: 1px solid #9b9b9b;
`;
const Corner = styled.div`
  width: 34px;
  flex: none;
  display: flex;
  align-items: flex-end;
  justify-content: flex-end;
  padding: 0 3px 3px 0;
  border-right: 1px solid #b5b5b5;
`;
const ColumnHead = styled.div`
  width: 80px;
  flex: none;
  text-align: center;
  font-size: 16.2px;
  line-height: 24px;
  color: #111;
  border-right: 1px solid;
  border-image: linear-gradient(#d4d4d4, #9b9b9b) 1;
`;
const SheetBody = styled.div`
  display: flex;
  height: 695px;
  overflow: hidden;
`;
const RowHeads = styled.div`
  width: 34px;
  flex: none;
  border-right: 1px solid #9b9b9b;
`;
const RowHead = styled.div`
  height: 24px;
  text-align: center;
  font-size: 16px;
  letter-spacing: -0.3px;
  line-height: 25px;
  color: #111;
  border-bottom: 1px solid #b0b0b0;
`;
const Cells = styled.div`
  position: relative;
  width: 1525px;
  height: 696px;
  background:
    repeating-linear-gradient(to right, transparent 0 79px, #d4d4d4 79px 80px),
    repeating-linear-gradient(to bottom, transparent 0 23px, #d4d4d4 23px 24px),
    #fff;
`;
const Step = styled.div`
  position: absolute;
  left: ${(p) => p.$x - 370}px;
  top: ${(p) => p.$y - 279}px;
  width: ${(p) => p.$w}px;
  height: 188px;
  padding-bottom: ${(p) => p.$lift}px;
  border: 2px solid #fff;
  border-radius: 21px;
  background: #4472c4;
  display: flex;
  align-items: center;
  justify-content: center;
  text-align: center;
  white-space: pre-line;
  color: #fff;
  font: 36.6px/47.6px "Open Sans", sans-serif;
  letter-spacing: 0.5px;
  -webkit-text-stroke: 0.35px #fff;
`;
const Canvas = styled.svg`
  position: absolute;
  left: 0;
  top: 0;
`;
const PaneToggle = styled.div`
  position: absolute;
  left: 99px;
  top: 288px;
  width: 23px;
  height: 23px;
  background: #fff;
  border: 1px solid #d8d8d8;
  display: flex;
  align-items: center;
  justify-content: center;
`;
const VScroll = styled.div`
  width: 19px;
  margin: 2px 0 0 3px;
  display: flex;
  flex-direction: column;
  background: #dadada;
`;
const ScrollButton = styled.div`
  width: 19px;
  height: ${(p) => p.$h || 19}px;
  flex: none;
  display: flex;
  align-items: center;
  justify-content: center;
  border: 1px solid #ababab;
  background: #fff;
`;
const VTrack = styled.div`
  height: 100px;
`;
const VThumb = styled.div`
  height: 579px;
  border: 1px solid #ababab;
  background: #fff;
`;
const ScrollGap = styled.div`
  flex: 1;
`;
const SheetBar = styled.div`
  height: 29px;
  display: flex;
  align-items: flex-start;
`;
const SheetBarStart = styled.div`
  width: 103px;
  height: 29px;
  border-top: 1px solid #9b9b9b;
  display: flex;
  align-items: center;
  padding-left: 28px;
  gap: 24px;
`;
const SheetTab = styled.div`
  width: 97px;
  height: 26px;
  border: 1px solid #9b9b9b;
  border-top: 0;
  border-bottom: 2px solid ${GREEN};
  background: #fff;
  color: ${GREEN};
  font-size: 16.3px;
  font-weight: 700;
  letter-spacing: -0.35px;
  line-height: 21px;
  text-align: center;
`;
const SheetBarRest = styled.div`
  width: 1359px;
  height: 29px;
  border-top: 1px solid #9b9b9b;
  display: flex;
  align-items: flex-start;
`;
const AddSheet = styled.div`
  margin: 4px 0 0 33px;
`;
const HScroll = styled.div`
  margin-top: 4px;
  display: flex;
  background: #dadada;
`;
const HThumb = styled.div`
  width: 527px;
  height: 19px;
  margin-left: -1px;
  border: 1px solid #ababab;
  background: #fff;
`;
const HTrack = styled.div`
  width: 30px;
`;

const COLUMNS = "ABCDEFGHIJKLMNOPQRS".split("");
const ROWS = Array.from({ length: 29 }, (_, i) => i + 6);
const STEPS = [
  [485, 330, 311, 4, "montagem dos\npaineis e\nsubconjuntos"],
  [914, 328, 312, 1, "pintura interna\ndos paineis"],
  [1348, 328, 311, 1, "montagem dos\nmecanismos"],
  [1348, 638, 311, 3, "aplicação de\ndinitrol"],
  [914, 638, 312, 4, "regulagem das\nportas no\ngabarito"],
];
const HANDLES = [
  [483, 926], [1072, 926], [1661, 926], [1661, 579],
  [915, 639], [1070, 639], [1226, 639], [915, 732], [1226, 732], [915, 826], [1070, 826], [1226, 826],
];

function Diagram() {
  return (
    <Cells>
      {STEPS.map(([x, y, w, lift, t]) => <Step key={t} $x={x} $y={y} $w={w} $lift={lift}>{t}</Step>)}
      <Canvas width="1525" height="696" viewBox="370 279 1525 696" fill="none">
        <g fill="#b0bbde">
          <path d="M821.5 400 H853.5 V385 L885.5 422.5 L853.5 461 V446 H821.5 Z" />
          <path d="M1252 400 H1286 V385 L1317.5 422.5 L1286 461 V446 H1252 Z" />
          <path d="M1480 542 V575 H1465.5 L1503.5 608 L1541.5 575 H1527 V542 Z" />
          <path d="M1321 708.5 H1289 V693.5 L1256 731.5 L1289 769.5 V754.5 H1321 Z" />
        </g>
        <path d="M482.5 279 V925.5 H1660.5 V279" stroke="#959595" strokeWidth="1.3" />
        <rect x="914.5" y="638.5" width="311" height="187" stroke="#fff" />
        <rect x="914.5" y="638.5" width="311" height="187" stroke="#7a7a7a" strokeDasharray="2 1.5" />
        <path d="M1069.5 608 V634" stroke="#959595" />
        <path d="M985.5 702 V756" stroke="#b98d4a" strokeWidth="1.2" />
        <g fill="#fff" stroke="#959595" strokeWidth="2.6">
          {HANDLES.map(([x, y]) => <circle key={`${x}-${y}`} cx={x} cy={y} r="5.9" />)}
        </g>
        <path d="M1078 606 A11.5 11.5 0 1 1 1081.7 594" stroke="#959595" strokeWidth="2.3" />
        <path d="M1075 603 A7 7 0 1 1 1077 594.5" stroke="#959595" strokeWidth="2.3" />
        <path d="M1073.5 595.5 H1088 L1080.5 604 Z" fill="#fff" stroke="#959595" strokeWidth="2" />
      </Canvas>
      <PaneToggle><Svg w={5} h={9} stroke="#808080" strokeWidth="1.3"><path d="M4.5 0.5 L1 4.5 L4.5 8.5" /></Svg></PaneToggle>
    </Cells>
  );
}

function Workbook() {
  return (
    <SheetArea>
      <SheetMain>
        <Sheet>
          <ColumnHeads>
            <Corner><Svg w={16} h={16}><path d="M16 0 V16 H0 Z" fill="#b4b4b4" /></Svg></Corner>
            {COLUMNS.map((c) => <ColumnHead key={c}>{c}</ColumnHead>)}
          </ColumnHeads>
          <SheetBody>
            <RowHeads>{ROWS.map((r) => <RowHead key={r}>{r}</RowHead>)}</RowHeads>
            <Diagram />
          </SheetBody>
        </Sheet>
        <VScroll>
          <ScrollButton><Svg w={10} h={6}><path d="M0 6 H10 L5 0 Z" fill="#606060" /></Svg></ScrollButton>
          <VTrack />
          <VThumb />
          <ScrollGap />
          <ScrollButton $h={18}><Svg w={9} h={5}><path d="M0 0 H9 L4.5 5 Z" fill="#606060" /></Svg></ScrollButton>
        </VScroll>
      </SheetMain>
      <SheetBar>
        <SheetBarStart>
          <Svg w={5} h={9}><path d="M5 0 V9 L0 4.5 Z" fill="#bdbdbd" /></Svg>
          <Svg w={5} h={9}><path d="M0 0 V9 L5 4.5 Z" fill="#bdbdbd" /></Svg>
        </SheetBarStart>
        <SheetTab>Planilha1</SheetTab>
        <SheetBarRest>
          <AddSheet>
            <Svg w={21} h={21} stroke="#808080"><circle cx="10.5" cy="10.5" r="9.7" strokeWidth="1.2" /><path d="M5.5 10.5 H15.5 M10.5 5.5 V15.5" strokeWidth="1.8" /></Svg>
          </AddSheet>
          <Dots $m="7px 15px 0 694px" />
          <HScroll>
            <ScrollButton><Svg w={6} h={9}><path d="M6 0 V9 L0 4.5 Z" fill="#606060" /></Svg></ScrollButton>
            <HThumb />
            <HTrack />
            <ScrollButton><Svg w={6} h={9}><path d="M0 0 V9 L6 4.5 Z" fill="#606060" /></Svg></ScrollButton>
          </HScroll>
        </SheetBarRest>
      </SheetBar>
    </SheetArea>
  );
}

/* ---------- status bar ---------- */
const StatusBar = styled.footer`
  height: 27px;
  flex: none;
  display: flex;
  align-items: center;
  padding-left: 1548px;
  border-top: 1px solid #c6c4c2;
  background: #f3f2f0;
`;
const ViewButton = styled.div`
  width: 50px;
  height: 26px;
  padding-right: 1px;
  flex: none;
  display: flex;
  align-items: center;
  justify-content: center;
  background: ${(p) => (p.$active ? "#c8c6c4" : "transparent")};
`;
const Slider = styled.div`
  width: 125px;
  height: 13px;
  margin: 0 6px 0 7px;
  padding-left: 60px;
  flex: none;
  background: linear-gradient(#a8a6a4, #a8a6a4) 0 6px / 100% 1px no-repeat;
`;
const SliderThumb = styled.i`
  display: block;
  width: 6px;
  height: 14px;
  background: #777573;
`;

function Status() {
  return (
    <StatusBar>
      <ViewButton $active>
        <Svg w={17} h={16} stroke="#444" strokeWidth="1.5"><path d="M0.8 0.8 H16.2 V15.2 H0.8 Z M0.8 5.6 H16.2 M0.8 10.4 H16.2 M6 0.8 V15.2 M11 0.8 V15.2" /></Svg>
      </ViewButton>
      <ViewButton>
        <Svg w={18} h={16} stroke="#555" strokeWidth="1.5"><path d="M0.8 0.8 H17.2 V15.2 H0.8 Z M5 3 H13 V13 H5 Z M7 5.5 H11 M7 8 H11 M7 10.5 H11" /></Svg>
      </ViewButton>
      <ViewButton>
        <Svg w={18} h={16} stroke="#555" strokeWidth="1.5"><path d="M0.8 0.8 H17.2 V15.2 H0.8 Z M0.8 10 H11 V0.8 M6 0.8 V10" /></Svg>
      </ViewButton>
      <Item $w={9} $ml={7}><Svg w={9} h={2} stroke="#555"><path d="M0 1 H9" strokeWidth="1.3" /></Svg></Item>
      <Slider><SliderThumb /></Slider>
      <Item $w={10}><Svg w={10} h={10} stroke="#555"><path d="M0 5 H10 M5 0 V10" strokeWidth="1.3" /></Svg></Item>
      <Label $ml={16} $size={12.2} $ls={-0.3}>100%</Label>
    </StatusBar>
  );
}

/* ---------- taskbar ---------- */
const Taskbar = styled.footer`
  height: 50px;
  flex: none;
  display: flex;
  align-items: center;
  background: #d5d5d5;
  color: #1a1a1a;
`;
const TaskSearch = styled.div`
  width: 430px;
  height: 50px;
  padding-left: 14px;
  flex: none;
  display: flex;
  align-items: center;
  background: #fff;
  border: 1px solid #cacaca;
`;
const TaskActive = styled.div`
  width: 61px;
  height: 50px;
  margin-left: 20px;
  padding-right: 2px;
  flex: none;
  display: flex;
  align-items: center;
  justify-content: center;
  background: #efefef;
  border-bottom: 3px solid #0078d7;
`;
const TrayText = styled.div`
  width: ${(p) => p.$w}px;
  margin-left: ${(p) => p.$ml}px;
  flex: none;
  text-align: center;
  font-size: ${(p) => p.$size}px;
  letter-spacing: ${(p) => p.$ls}px;
  line-height: 22.5px;
  white-space: pre-line;
`;
const ShowDesktop = styled.i`
  width: 1px;
  height: 50px;
  margin-left: 25px;
  background: #a8a8a8;
`;

function TaskbarView() {
  return (
    <Taskbar>
      <Item $w={40} $ml={20}>
        <Svg w={20} h={20}><path fill="#000" d="M0 3 L8.3 1.7 V9.4 H0 Z M9.4 1.5 L20 0 V9.4 H9.4 Z M0 10.5 H8.3 V18.2 L0 17 Z M9.4 10.5 H20 V20 L9.4 18.4 Z" /></Svg>
      </Item>
      <TaskSearch>
        <Magnifier w={21} h={21} color="#111" />
        <Label $ml={14} $size={17.7} $ls={0.08} $color="#333">Digite aqui para pesquisar</Label>
      </TaskSearch>
      <Item $w={20} $ml={20}><Svg w={20} h={20}><circle cx="10" cy="10" r="8.2" stroke="#000" strokeWidth="2.8" /></Svg></Item>
      <Item $w={21} $ml={40}>
        <Svg w={20} h={20} stroke="#000" strokeWidth="1.3">
          <path d="M0.7 5.5 H12.3 V14.5 H0.7 Z M0.7 0 V3 H12.3 V0 M0.7 20 V17 H12.3 V20 M18 0 V5 M18 10 V20" /><rect x="17" y="6" width="2.4" height="2.6" fill="#000" stroke="none" />
        </Svg>
      </Item>
      <Item $w={30} $ml={38}>
        <Svg w={30} h={30}>
          <defs>
            <linearGradient id="edgeTop" x1="0" y1="0.3" x2="1" y2="0.7"><stop offset="0" stopColor="#2ea8e6" /><stop offset="0.5" stopColor="#2fc3c8" /><stop offset="1" stopColor="#6be04a" /></linearGradient>
            <linearGradient id="edgeLeft" x1="0" y1="0" x2="0.6" y2="1"><stop offset="0" stopColor="#1a8fdc" /><stop offset="1" stopColor="#0b63b8" /></linearGradient>
          </defs>
          <path d="M0 14 C0 5 7 0 15 0 C24 0 30 6 30 13 C30 18 27 20 23 20 C19 20 17.5 18.5 18 17 C19 14 17 11 13 9 C8 7 2 9 0 14 Z" fill="url(#edgeTop)" />
          <path d="M0 14 C2 7 9 6 13 9 C16 11 18 13 17 15 C15 11 10 14 11 19 C12 25 18 28 24 27 C21 30 16 30.5 11 29.5 C4 27.5 0 22 0 14 Z" fill="url(#edgeLeft)" />
          <path d="M12 14 C9 17 10 25 18 26.5 C22 27.3 25 26 27.5 22.5 C28.5 23 28 24.5 27 25.5 C23 30 17 31 12 29.5 C7 26 7 17 12 14 Z" fill="#114a8b" />
        </Svg>
      </Item>
      <Item $w={28} $ml={33}>
        <Svg w={28} h={24}>
          <path d="M0 1 Q0 0 1 0 H11 L13 2 V5 H0 Z" fill="#e19f05" /><path d="M0 4 H12 L14 2 H27 Q28 2 28 3 V22 H0 Z" fill="#fbd35a" />
          <path d="M0 10 H28 V21 Q28 22 27 22 H1 Q0 22 0 21 Z" fill="#fccb47" />
          <path d="M5 23 V14 Q5 12.5 6.5 12.5 H21.5 Q23 12.5 23 14 V23 H18.5 V17 H9.5 V23 Z" fill="#3a8ed6" />
        </Svg>
      </Item>
      <Item $w={30} $ml={33}>
        <Svg w={30} h={28}>
          <path d="M0 9 L15 0 L30 9 V16 H0 Z" fill="#0f4f98" /><path d="M2 9 H28 V20 H2 Z" fill="#f7f7f7" />
          <path d="M0 9 L15 18 L30 9 V28 H0 Z" fill="#2aa7ea" /><path d="M15 18 L30 9 V28 Z" fill="#35c2f5" /><path d="M0 28 L15 18 L30 28 Z" fill="#1f93dc" />
        </Svg>
      </Item>
      <Item $w={24} $ml={35}>
        <Svg w={24} h={29}>
          <path d="M1 8 L14 0 L16 1 V7 L6.5 10 V19 L1 22.5 Z" fill="#b3261e" /><path d="M1 14 L6.5 12 V19 L1 22.5 Z" fill="#c0569f" />
          <path d="M14 0 L23 3 V26 L15 29 V5 Z" fill="#e4500b" /><path d="M4 23.5 H15 V29 Z" fill="#d81b3c" /><path d="M15 1 L23 3 V10 L15 7 Z" fill="#f28100" />
        </Svg>
      </Item>
      <TaskActive>
        <Svg w={30} h={28}>
          <rect x="7" y="0" width="23" height="28" rx="1.5" fill="#185c37" />
          <path d="M7 1 Q7 0 8 0 H18.5 V7 H7 Z" fill="#21a366" /><path d="M18.5 0 H29 Q30 0 30 1 V7 H18.5 Z" fill="#33c481" />
          <rect x="7" y="7" width="11.5" height="7" fill="#21a366" /><rect x="18.5" y="7" width="11.5" height="7" fill="#21a366" />
          <rect x="7" y="14" width="11.5" height="7" fill="#185c37" /><rect x="18.5" y="14" width="11.5" height="7" fill="#107c41" />
          <rect x="0" y="6" width="15" height="15.5" rx="1.2" fill="#107c41" />
          <path d="M4.6 9.5 L10.4 18 M10.4 9.5 L4.6 18" stroke="#fff" strokeWidth="2.1" />
        </Svg>
      </TaskActive>
      <Item $w={17} $ml={651}><Svg w={16} h={9} stroke="#111" strokeWidth="1.5"><path d="M0.7 8.3 L8 1 L15.3 8.3" /></Svg></Item>
      <Item $w={20} $ml={12}>
        <Svg w={20} h={14}>
          <path d="M4.5 13.3 A4 4 0 0 1 3.2 5.5 A5.5 5.5 0 0 1 13.5 4 A4.8 4.8 0 0 1 16 13.3 Z" fill="#8a8a8a" />
          <path d="M3.2 11.5 L9.5 7.5 L17.8 11.3 Q17 12.7 15.5 12.7 H5 Q3.6 12.7 3.2 11.5 Z" fill="#f4f4f4" />
          <path d="M4.5 13.3 A4 4 0 0 1 3.2 5.5 A5.5 5.5 0 0 1 13.5 4 A4.8 4.8 0 0 1 16 13.3 Z" stroke="#222" strokeWidth="1.2" />
        </Svg>
      </Item>
      <Item $w={20} $ml={11}>
        <Svg w={19} h={12}><path d="M0.7 0.7 H17 V11.3 H0.7 Z M17.8 3.5 V8.5" stroke="#111" strokeWidth="1.4" /><rect x="2.5" y="2.5" width="10" height="7" fill="#000" /></Svg>
      </Item>
      <Item $w={17} $ml={12}>
        <Svg w={16} h={15} stroke="#333" strokeWidth="1.3">
          <path d="M0.7 14.5 C1 7 7 1 15 0.7 M4.5 14.5 C5 9 9 5 15 4.7 M8.5 14.5 C9 11.5 11.5 9 15 8.7" /><circle cx="14" cy="13.5" r="1.5" fill="#000" stroke="none" />
        </Svg>
      </Item>
      <Item $w={20} $ml={10}>
        <Svg w={20} h={16} stroke="#222" strokeWidth="1.2">
          <path d="M0.6 5 H3.5 L8 1 V15 L3.5 11 H0.6 Z M10.5 5.5 Q12 8 10.5 10.5 M13.3 3.3 Q16.3 8 13.3 12.7" /><path d="M16.3 1.2 Q20.5 8 16.3 14.8" stroke="#999" />
        </Svg>
      </Item>
      <TrayText $w={36} $ml={8} $size={14.2} $ls={-0.45}>{"POR\nPTB2"}</TrayText>
      <TrayText $w={80} $ml={11} $size={14.4} $ls={-0.15}>{"13:40\n20/03/2021"}</TrayText>
      <Item $w={20} $ml={21}>
        <Svg w={20} h={20} stroke="#111" strokeWidth="1.4"><path d="M0.7 0.7 H19.3 V16 H13 L10 19 L7 16 H0.7 Z" /></Svg>
      </Item>
      <ShowDesktop />
    </Taskbar>
  );
}

export default function App() {
  return (
    <>
      <GlobalStyle />
      <Window>
        <Title />
        <Tabs />
        <RibbonBar />
        <Formula />
        <Main>
          <RecoveryPane />
          <Workbook />
        </Main>
        <Status />
        <TaskbarView />
      </Window>
    </>
  );
}
